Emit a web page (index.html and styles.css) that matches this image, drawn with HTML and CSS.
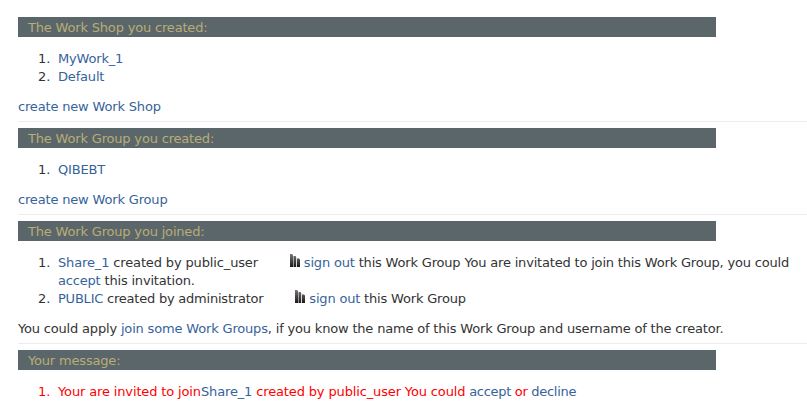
FILE: index.html
```html
<!DOCTYPE html>
<html lang="en">
<head>
<meta charset="utf-8">
<title>Work Shops and Work Groups</title>
<link rel="stylesheet" href="styles.css">
</head>
<body>
<svg class="defs" aria-hidden="true">
  <defs>
    <linearGradient id="bar" gradientUnits="userSpaceOnUse" x1="0" x2="0" y1="0" y2="13">
      <stop offset="0" stop-color="#777"/><stop offset="1" stop-color="#1c1816"/>
    </linearGradient>
  </defs>
  <symbol id="bars" viewBox="0 0 10 13">
    <path fill="url(#bar)" d="M0 0h2l1 1v12H0zM3.500 2h2l.7 1v10H3.500zM7 4.500h2l1 1V13H7z"/>
  </symbol>
</svg>
<section>
  <h2>The Work Shop you created:</h2>
  <ol>
    <li><a href="#">MyWork_1</a></li>
    <li><a href="#">Default</a></li>
  </ol>
  <p><a href="#">create new Work Shop</a></p>
</section>
<section>
  <h2>The Work Group you created:</h2>
  <ol>
    <li><a href="#">QIBEBT</a></li>
  </ol>
  <p><a href="#">create new Work Group</a></p>
</section>
<section>
  <h2>The Work Group you joined:</h2>
  <ol>
    <li><span class="wide"><a href="#">Share_1</a> created by public_user</span> <svg class="icon"><use href="#bars"/></svg> <a href="#">sign out</a> this Work Group You are invitated to join this Work Group, you could <a href="#">accept</a> this invitation.</li>
    <li><span class="narrow"><a href="#">PUBLIC</a> created by administrator</span> <svg class="icon"><use href="#bars"/></svg> <a href="#">sign out</a> this Work Group</li>
  </ol>
  <p>You could apply <a href="#">join some Work Groups</a>, if you know the name of this Work Group and username of the creator.</p>
</section>
<section>
  <h2>Your message:</h2>
  <ol class="messages">
    <li><span class="wide">Your are invited to join<a href="#">Share_1</a> created by public_user You could</span> <a href="#">accept</a> or <a href="#">decline</a></li>
  </ol>
</section>
</body>
</html>
```
FILE: styles.css
```css
body {
  margin: 17px 0 0 18px;
  background: #fff;
  color: #333;
  font: 13px/18px Verdana, "DejaVu Sans", sans-serif;
  letter-spacing: -0.18px;
  overflow: hidden;
}

.defs {
  position: absolute;
  width: 0;
  height: 0;
}

section {
  padding-bottom: 5px;
  margin-bottom: 6px;
  border-bottom: 1px solid #ececec;
}

section:last-child {
  border-bottom: 0;
}

h2 {
  width: 688px;
  margin: 0 0 13px;
  padding: 2px 0 0 10px;
  background: #5b666b;
  color: #b8ad76;
  font-size: 13px;
  font-weight: normal;
}

ol {
  margin: 0 0 12px;
  padding-left: 40px;
  list-style: none;
  counter-reset: row;
}

li {
  counter-increment: row;
}

li::before {
  content: counter(row) ".";
  display: inline-block;
  width: 20px;
  margin-left: -20px;
  letter-spacing: 0;
}

p {
  margin: 0;
}

p > a:only-child {
  letter-spacing: -0.17px;
}

a {
  color: #36639c;
  text-decoration: none;
}

.icon {
  width: 10px;
  height: 13px;
  margin-left: 28px;
  vertical-align: 0;
}

.wide {
  letter-spacing: -0.14px;
}

.narrow {
  letter-spacing: -0.22px;
}

.messages {
  color: #f00;
  letter-spacing: -0.3px;
}
```
